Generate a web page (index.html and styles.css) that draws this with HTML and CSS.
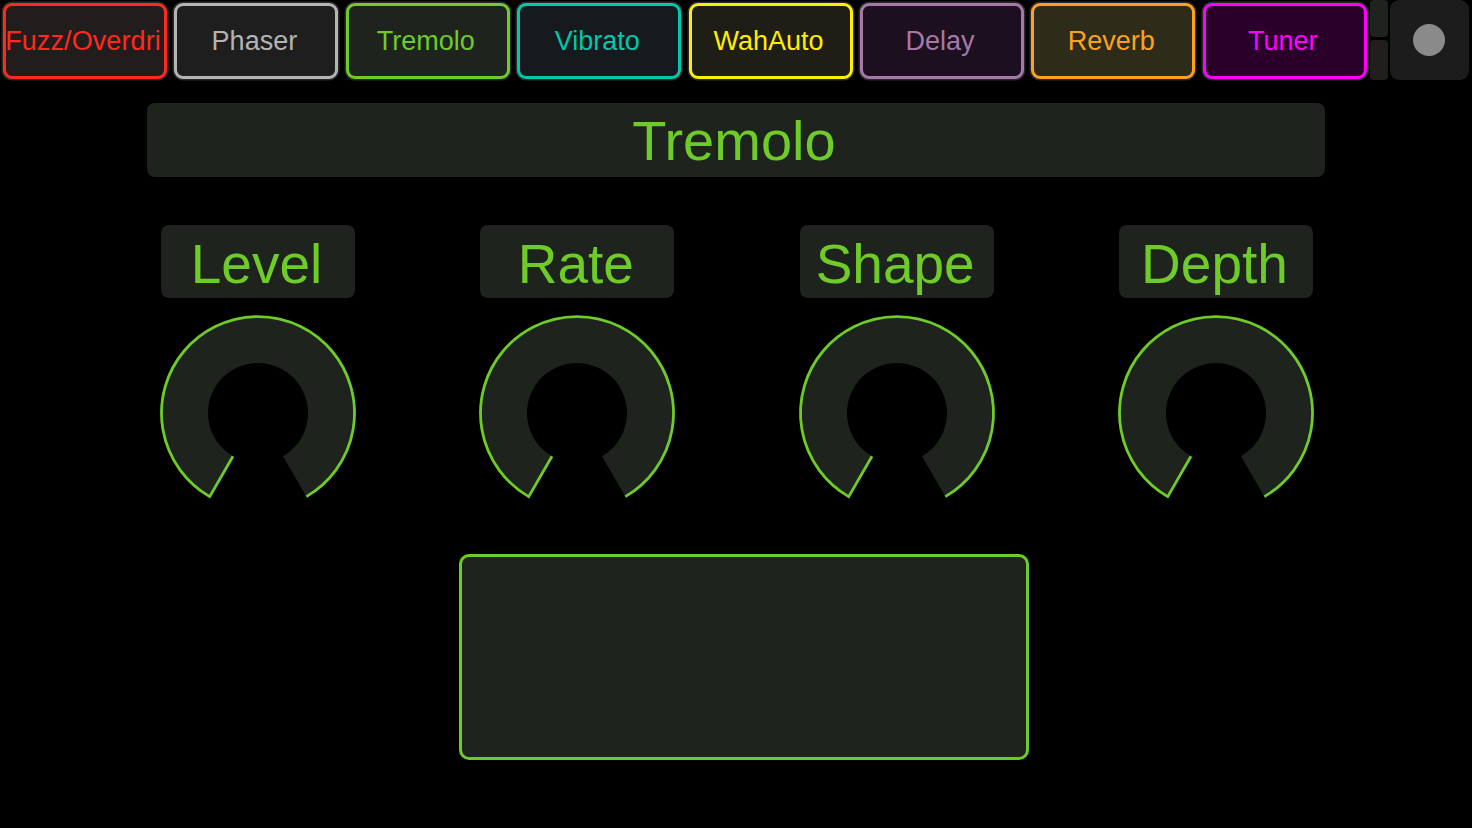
FILE: index.html
```html
<!DOCTYPE html>
<html>
<head>
<meta charset="utf-8">
<link rel="stylesheet" href="styles.css">
</head>
<body>
<div class="topbar">
  <div class="tabs">
    <div class="tab fuzz">Fuzz/Overdri</div>
    <div class="tab phaser">Phaser</div>
    <div class="tab tremolo">Tremolo</div>
    <div class="tab vibrato">Vibrato</div>
    <div class="tab wah">WahAuto</div>
    <div class="tab delay">Delay</div>
    <div class="tab reverb">Reverb</div>
    <div class="tab tuner">Tuner</div>
  </div>
  <div class="minicol">
    <div class="mini mini-top"></div>
    <div class="mini mini-bot"></div>
  </div>
  <div class="power"><div class="dot"></div></div>
</div>

<div class="title">Tremolo</div>

<div class="knobs">
  <div class="knob">
    <div class="label">Level</div>
    <svg class="dial" width="194" height="188" viewBox="0 0 194 188">
      <path class="dial-fill" d="M72 141.3 L48.7 181.6 A96.5 96.5 0 1 1 145.3 181.6 L122 141.3 A50 50 0 1 0 72 141.3 Z"/>
      <path class="dial-line" d="M72 141.3 L48.7 181.6 A96.5 96.5 0 1 1 145.3 181.6"/>
    </svg>
  </div>
  <div class="knob">
    <div class="label">Rate</div>
    <svg class="dial" width="194" height="188" viewBox="0 0 194 188">
      <path class="dial-fill" d="M72 141.3 L48.7 181.6 A96.5 96.5 0 1 1 145.3 181.6 L122 141.3 A50 50 0 1 0 72 141.3 Z"/>
      <path class="dial-line" d="M72 141.3 L48.7 181.6 A96.5 96.5 0 1 1 145.3 181.6"/>
    </svg>
  </div>
  <div class="knob">
    <div class="label">Shape</div>
    <svg class="dial" width="194" height="188" viewBox="0 0 194 188">
      <path class="dial-fill" d="M72 141.3 L48.7 181.6 A96.5 96.5 0 1 1 145.3 181.6 L122 141.3 A50 50 0 1 0 72 141.3 Z"/>
      <path class="dial-line" d="M72 141.3 L48.7 181.6 A96.5 96.5 0 1 1 145.3 181.6"/>
    </svg>
  </div>
  <div class="knob">
    <div class="label">Depth</div>
    <svg class="dial" width="194" height="188" viewBox="0 0 194 188">
      <path class="dial-fill" d="M72 141.3 L48.7 181.6 A96.5 96.5 0 1 1 145.3 181.6 L122 141.3 A50 50 0 1 0 72 141.3 Z"/>
      <path class="dial-line" d="M72 141.3 L48.7 181.6 A96.5 96.5 0 1 1 145.3 181.6"/>
    </svg>
  </div>
</div>

<div class="panel"></div>
</body>
</html>
```

FILE: styles.css
```css
html, body {
  margin: 0;
  padding: 0;
  background: #000;
  font-family: "Liberation Sans", Arial, sans-serif;
}
body {
  width: 1472px;
  height: 828px;
  overflow: hidden;
}
.topbar {
  display: flex;
  height: 80px;
  align-items: flex-start;
}
.tabs {
  display: flex;
  gap: 7.4px;
  padding-left: 3px;
  padding-top: 3px;
}
.tab {
  box-sizing: border-box;
  width: 164px;
  height: 76px;
  border: 3px solid;
  border-radius: 9px;
  box-shadow: 0 0 0 1.5px #2a2a2a;
  font-size: 27px;
  line-height: 70px;
  text-align: center;
  text-indent: -4px;
  white-space: nowrap;
  overflow: hidden;
}
.fuzz { color: #ff2a1e; border-color: #ff2a1e; background: #231c1c; letter-spacing: 0.1px; }
.phaser { color: #b4b4b4; border-color: #b4b4b4; background: #1e1e1e; }
.tremolo { color: #6ecb28; border-color: #6ecb28; background: #1e231e; }
.vibrato { color: #00c8aa; border-color: #00c8aa; background: #16191e; }
.wah { color: #ffee00; border-color: #ffee00; background: #1e1e16; }
.delay { color: #a678a6; border-color: #a678a6; background: #1c1020; }
.reverb { color: #ffa01e; border-color: #ffa01e; background: #2c2c18; }
.tuner { color: #ff00ff; border-color: #ff00ff; background: #2a002a; }

.minicol {
  display: flex;
  flex-direction: column;
  gap: 3px;
  margin-left: 3px;
  width: 18px;
}
.mini {
  border-radius: 4px;
}
.mini-top { height: 37px; background: #1e231e; }
.mini-bot { height: 40px; background: #231e1e; }
.power {
  margin-left: 2px;
  width: 79px;
  height: 80px;
  background: #1c1c1c;
  border-radius: 9px;
  display: flex;
  align-items: center;
  justify-content: center;
}
.dot {
  width: 32px;
  height: 32px;
  border-radius: 50%;
  background: #8a8a8a;
}
.title {
  margin: 23px 0 0 147px;
  width: 1178px;
  height: 74px;
  background: #1e231e;
  border-radius: 8px;
  color: #6ecb28;
  font-size: 56px;
  line-height: 76px;
  text-align: center;
  text-indent: -4px;
}
.knobs {
  display: flex;
  justify-content: space-between;
  width: 1152px;
  margin: 48px 0 0 161px;
}
.knob {
  width: 194px;
  display: flex;
  flex-direction: column;
}
.label {
  height: 73px;
  background: #1e231e;
  border-radius: 8px;
  color: #6ecb28;
  font-size: 55px;
  line-height: 78px;
  text-align: center;
  text-indent: -3px;
}
.dial {
  display: block;
  margin-top: 17px;
  overflow: visible;
}
.dial-fill {
  fill: #1e231e;
}
.dial-line {
  fill: none;
  stroke: #6ecb28;
  stroke-width: 2.8;
}
.panel {
  box-sizing: border-box;
  margin: 51px 0 0 459px;
  width: 570px;
  height: 206px;
  border: 3px solid #6ecb28;
  border-radius: 10px;
  background: #1e231e;
}
```
